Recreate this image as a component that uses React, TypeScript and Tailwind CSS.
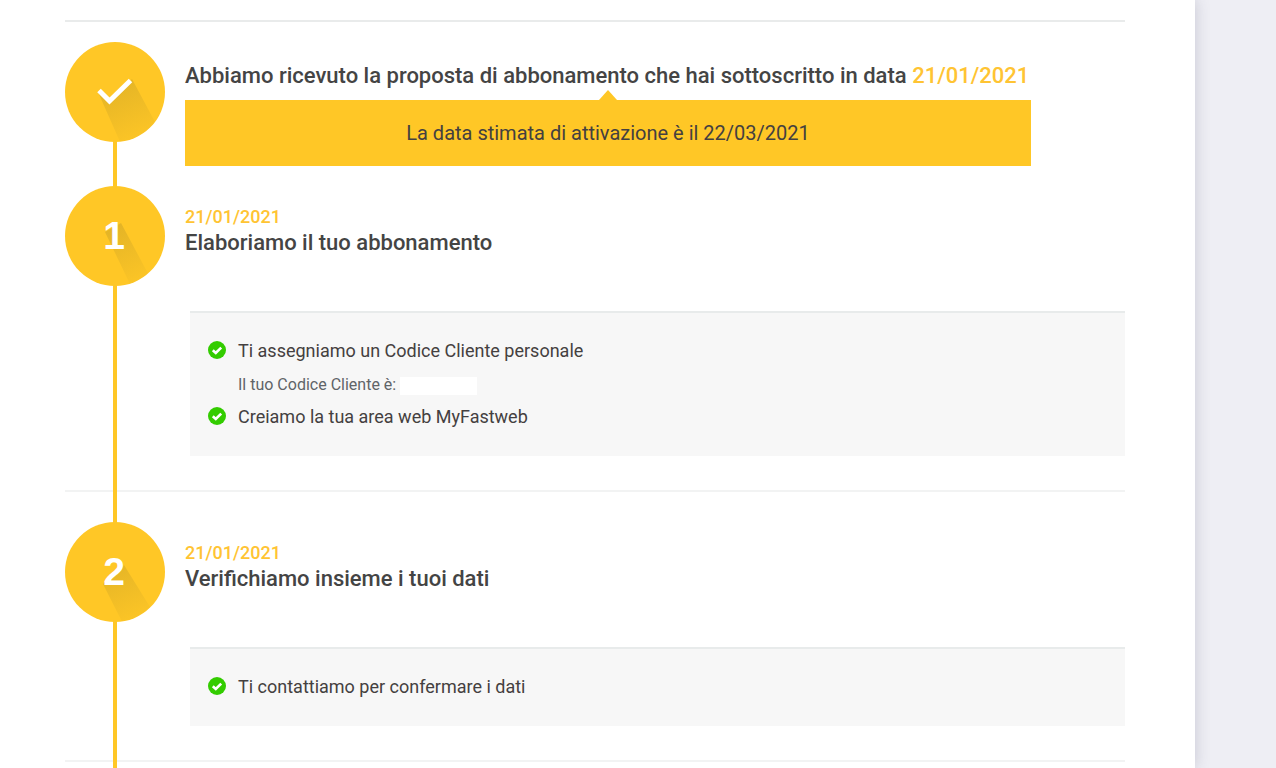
import React from "react";

function LongShadow({ d }: { d: string }) {
  return (
    <svg className="absolute inset-0 rounded-full" width="100" height="100" viewBox="0 0 100 100" aria-hidden="true">
      <defs>
        <linearGradient id="ls" gradientUnits="userSpaceOnUse" x1="48" y1="42" x2="75" y2="100">
          <stop offset="0" stopColor="#c9a227" stopOpacity="0.5" />
          <stop offset="1" stopColor="#c9a227" stopOpacity="0.03" />
        </linearGradient>
      </defs>
      <path d={d} fill="url(#ls)" />
    </svg>
  );
}

function Circle({ children, shadow }: { children: React.ReactNode; shadow: string }) {
  return (
    <div className="relative z-10 flex h-[100px] w-[100px] shrink-0 items-center justify-center rounded-full bg-[#ffc726]">
      <LongShadow d={shadow} />
      {children}
    </div>
  );
}

function Num({ n }: { n: string }) {
  return (
    <span className="relative -left-[1px] -top-[1px] text-[39px] leading-none font-bold text-white [font-family:'Liberation_Sans',Arial,sans-serif]">
      {n}
    </span>
  );
}

function Check() {
  return (
    <svg width="18" height="18" viewBox="0 0 18 18" className="shrink-0" aria-hidden="true">
      <circle cx="9" cy="9" r="9" fill="#33cc00" />
      <path d="M4.8 9.2 L7.8 12 L13.2 6.6" fill="none" stroke="#fff" strokeWidth="2.6" />
    </svg>
  );
}

function Item({ children }: { children: React.ReactNode }) {
  return (
    <div className="flex h-[24px] items-center gap-[12px] text-[18px] text-[#444040]">
      <Check />
      <span>{children}</span>
    </div>
  );
}

export default function App() {
  return (
    <div className="flex h-[768px] w-full overflow-hidden bg-[#eeeef4] [font-family:Roboto,'Liberation_Sans',sans-serif]">
      <main className="h-full w-[1195px] shrink-0 bg-white pl-[65px] pt-[20px] shadow-[0_0_14px_rgba(60,60,90,0.22)]">
        <div className="relative w-[1060px]">
          <div className="absolute left-[48px] top-[100px] h-[700px] w-[4px] bg-[#ffc726]" />
          <div className="h-[2px] bg-[#e9ebeb]" />

          <section className="flex pt-[20px]">
            <Circle shadow="M33 50 L55 99.7 A50 50 0 0 0 90 80 L67 37 L44 60 Z">
              <svg width="36" height="28" viewBox="0 0 36 28" className="relative" aria-hidden="true">
                <path d="M2 12.5 L12.5 23 L33.5 2.5" fill="none" stroke="#fff" strokeWidth="5" />
              </svg>
            </Circle>
            <div className="ml-[20px] w-[846px] pt-[20px]">
              <h2 className="h-[28px] text-[22px] leading-[28px] font-medium whitespace-nowrap text-[#444444]">
                Abbiamo ricevuto la proposta di abbonamento che hai sottoscritto in data{" "}
                <span className="text-[#ffc433]">21/01/2021</span>
              </h2>
              <div className="relative mt-[10px] flex h-[66px] items-center justify-center bg-[#ffc726] text-[20px] text-[#444040]">
                <span className="absolute -top-[10px] left-1/2 h-0 w-0 -translate-x-1/2 border-x-[9px] border-b-[10px] border-x-transparent border-b-[#ffc726]" />
                La data stimata di attivazione è il 22/03/2021
              </div>
            </div>
          </section>

          <section className="mt-[20px] h-[306px] border-b-2 border-[#f2f3f3]">
            <div className="flex">
              <Circle shadow="M40 46 L65 98 A50 50 0 0 0 83 87.5 L56 37 Z">
                <Num n="1" />
              </Circle>
              <div className="ml-[20px] pt-[21px]">
                <div className="text-[18px] leading-[20px] font-medium text-[#ffc433]">21/01/2021</div>
                <h3 className="mt-[2px] text-[22px] leading-[28px] font-medium text-[#444444]">Elaboriamo il tuo abbonamento</h3>
              </div>
            </div>
            <div className="mt-[25px] ml-[125px] h-[145px] border-t-2 border-[#e8ebeb] bg-[#f7f7f7] pl-[18px] pt-[25px]">
              <Item>Ti assegniamo un Codice Cliente personale</Item>
              <div className="mt-[15px] ml-[30px] flex h-[18px] items-center text-[16px] text-[#5f6468]">
                <span className="-mt-[3px]">Il tuo Codice Cliente è:</span>
                <span className="ml-[4px] h-[18px] w-[77px] bg-white" />
              </div>
              <div className="mt-[9px]">
                <Item>Creiamo la tua area web MyFastweb</Item>
              </div>
            </div>
          </section>

          <section className="h-[270px] border-b-2 border-[#f2f3f3] pt-[30px]">
            <div className="flex">
              <Circle shadow="M38 62 L57 99.5 A50 50 0 0 0 85 85 L59 43 L50 50 Z">
                <Num n="2" />
              </Circle>
              <div className="ml-[20px] pt-[21px]">
                <div className="text-[18px] leading-[20px] font-medium text-[#ffc433]">21/01/2021</div>
                <h3 className="mt-[2px] text-[22px] leading-[28px] font-medium text-[#444444]">Verifichiamo insieme i tuoi dati</h3>
              </div>
            </div>
            <div className="mt-[25px] ml-[125px] h-[79px] border-t-2 border-[#e8ebeb] bg-[#f7f7f7] pl-[18px] pt-[25px]">
              <Item>Ti contattiamo per confermare i dati</Item>
            </div>
          </section>
        </div>
      </main>
    </div>
  );
}
